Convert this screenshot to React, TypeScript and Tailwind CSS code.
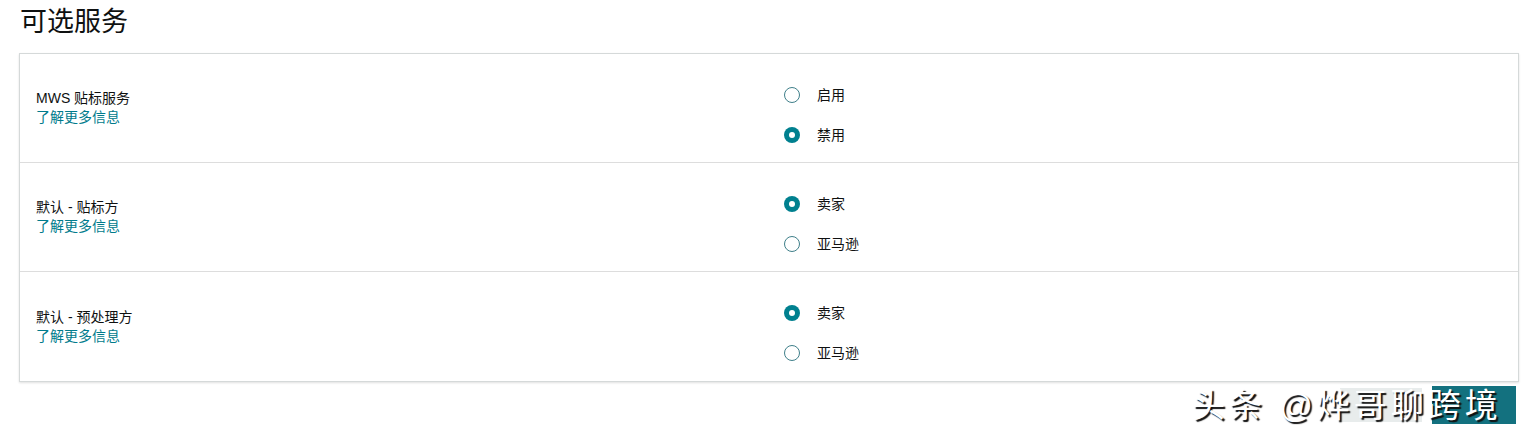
import React from 'react';

type Option = { label: string; checked: boolean };
type Row = { title: string; options: Option[] };

const rows: Row[] = [
  { title: 'MWS 贴标服务', options: [{ label: '启用', checked: false }, { label: '禁用', checked: true }] },
  { title: '默认 - 贴标方', options: [{ label: '卖家', checked: true }, { label: '亚马逊', checked: false }] },
  { title: '默认 - 预处理方', options: [{ label: '卖家', checked: true }, { label: '亚马逊', checked: false }] },
];

const Radio: React.FC<{ checked: boolean }> = ({ checked }) =>
  checked ? (
    <span className="flex items-center justify-center w-4 h-4 rounded-full bg-[#00808f]">
      <span className="w-[6px] h-[6px] rounded-full bg-white" />
    </span>
  ) : (
    <span className="w-4 h-4 rounded-full border border-[#3f7f8a] bg-white" />
  );

const App: React.FC = () => {
  return (
    <div
      className="relative h-[443px] bg-white text-[#0f1111]"
      style={{ fontFamily: '"Liberation Sans", "Noto Sans CJK SC", sans-serif' }}
    >
      {/* Section title */}
      <h1 className="pl-[20px] pt-[5px] text-[27px] leading-[34px] font-normal text-[#0f1111]">可选服务</h1>

      {/* Options card */}
      <div className="ml-[19px] mt-[14px] w-[1500px] border border-[#d5d9d9] shadow-[0_1px_2px_rgba(0,0,0,0.12)] bg-white">
        {rows.map((row, i) => (
          <div
            key={row.title}
            className={`flex h-[109px] ${i < rows.length - 1 ? 'border-b border-[#dddddd]' : 'h-[108px]'}`}
          >
            <div className="w-[764px] pl-[16px] flex flex-col justify-center text-[14px] leading-[19px]">
              <span className="text-[#0f1111]">{row.title}</span>
              <a className="text-[#007b8c] cursor-pointer">了解更多信息</a>
            </div>
            <div className="flex flex-col gap-[20px] pt-[31px]">
              {row.options.map((opt) => (
                <label key={opt.label} className="flex items-center h-[20px] text-[14px] text-[#0f1111]">
                  <Radio checked={opt.checked} />
                  <span className="ml-[17px]">{opt.label}</span>
                </label>
              ))}
            </div>
          </div>
        ))}
      </div>

      {/* Watermark overlay */}
      <div className="absolute left-[1192px] top-[386px] flex items-center h-[40px]">
        <div className="absolute left-[148px] top-[2px] w-[82px] h-[34px] bg-[#e8ecec]" />
        <div className="absolute left-[240px] top-0 w-[84px] h-[38px] bg-[#13717f]" />
        <span className="relative text-[33px] leading-[40px] text-white [text-shadow:2px_2px_1px_#111] tracking-[4px] whitespace-nowrap">
          头条 @烨哥聊跨境
        </span>
      </div>
    </div>
  );
};

export default App;
